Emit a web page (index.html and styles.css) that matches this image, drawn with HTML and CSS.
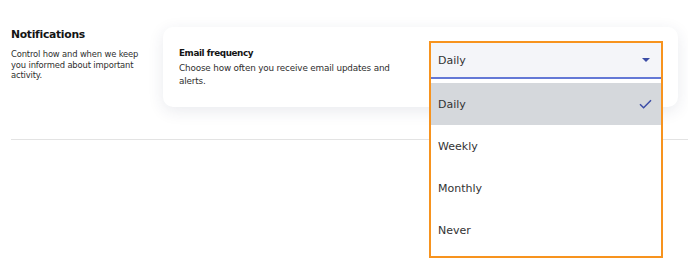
FILE: index.html
```html
<!DOCTYPE html>
<html lang="en">
<head>
    <meta charset="UTF-8">
    <meta name="viewport" content="width=device-width, initial-scale=1.0">
    <title>Notification settings</title>
    <link rel="stylesheet" href="styles.css">
</head>
<body>
    <div class="settings">
        <div class="settings-row">
            <div class="section-info">
                <h2>Notifications</h2>
                <p>Control how and when we keep you informed about important activity.</p>
            </div>

            <div class="card">
                <div class="field-text">
                    <h3>Email frequency</h3>
                    <p>Choose how often you receive email updates and alerts.</p>
                </div>

                <div class="select-wrap">
                    <div class="select-field">
                        <span>Daily</span>
                        <svg class="caret" width="8" height="4" viewBox="0 0 8 4"><path d="M0 0h8L4 4z" fill="#3b4ca6"/></svg>
                    </div>
                    <ul class="listbox">
                        <li class="option selected">
                            <span>Daily</span>
                            <svg width="13" height="10" viewBox="0 0 13 10"><path d="M1 5.2l3.6 3.5L12 1.2" fill="none" stroke="#3b4ca6" stroke-width="1.5"/></svg>
                        </li>
                        <li class="option">Weekly</li>
                        <li class="option">Monthly</li>
                        <li class="option">Never</li>
                    </ul>
                </div>
            </div>
        </div>
        <hr class="divider">
    </div>
</body>
</html>
```

FILE: styles.css
```css
html, body { min-height: 100%; }
body {
    margin: 0; min-height: 100vh;
    font-family: 'DejaVu Sans', 'Open Sans', sans-serif;
    color: #2b2b2b;
    background: #fff;
}
.settings { padding: 27px 0 0 11px; min-height: 242px; }
.settings-row { display: flex; }
.section-info { width: 152px; }
.section-info h2 {
    margin: 1px 0 8px; font-size: 10.8px; letter-spacing: -0.3px;
    font-weight: bold; color: #141414;
}
.section-info p {
    margin: 0; font-size: 8.4px; line-height: 10.5px; letter-spacing: -0.15px;
    color: #2e2e2e; width: 134px;
}
.card {
    display: flex; justify-content: space-between;
    width: 515px; height: 80px; box-sizing: border-box;
    padding: 14px 15px 0 16px;
    background: #fff; border-radius: 10px;
    box-shadow: 0 4px 16px rgba(40, 50, 90, 0.1);
}
.field-text { padding-top: 7px; width: 230px; }
.field-text h3 {
    margin: 0 0 4px; font-size: 8.8px; letter-spacing: -0.4px;
    font-weight: bold; color: #141414;
}
.field-text p {
    margin: 0; font-size: 8.8px; line-height: 13px; letter-spacing: -0.15px;
    color: #2e2e2e;
}
.select-wrap {
    position: relative; width: 234px; height: 38px; box-sizing: border-box;
    border: 2px solid #f7931e; border-bottom: none;
}
.select-field {
    display: flex; justify-content: space-between; align-items: center;
    height: 34px; padding: 0 11px 0 7px;
    background: #f4f5f9; border-bottom: 2px solid #6478d6;
    font-size: 11px; color: #333;
}
.caret { display: block; }
.listbox {
    position: absolute; top: 36px; left: -2px; right: -2px; z-index: 2;
    margin: 0; padding: 4px 0 5px; list-style: none;
    background: #fff; border: 2px solid #f7931e; border-top: none;
}
.option {
    display: flex; justify-content: space-between; align-items: center;
    height: 42px; padding: 0 9px 0 7px;
    font-size: 11px; color: #333;
}
.option.selected { background: #d5d8dc; }
.divider {
    margin: 32px 0 0; border: none; border-top: 1px solid #e3e3e3;
}
```
